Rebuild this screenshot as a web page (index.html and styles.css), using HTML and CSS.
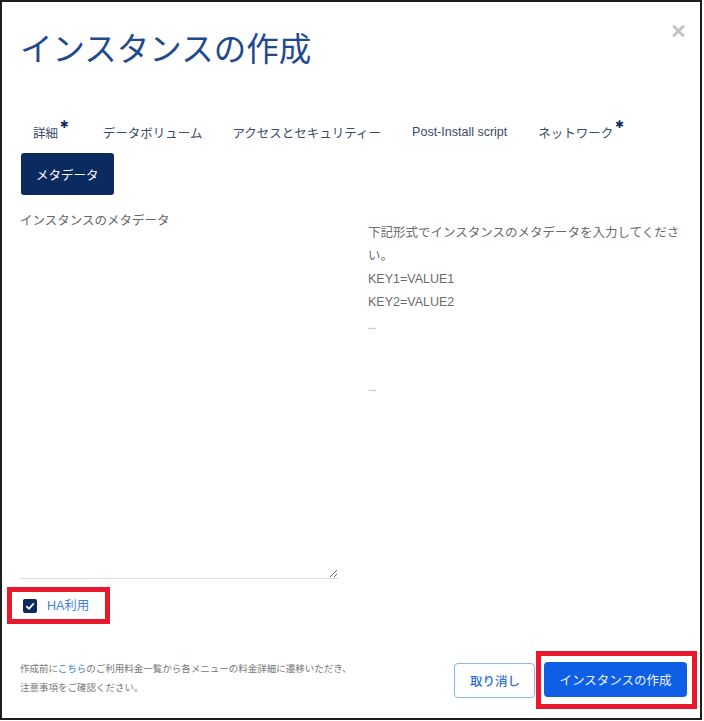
FILE: index.html
```html
<!DOCTYPE html>
<html lang="ja">
<head>
    <meta charset="UTF-8">
    <title>インスタンスの作成</title>
    <link rel="stylesheet" href="styles.css">
</head>
<body>
    <div class="frame">
        <div class="header">
            <h1>インスタンスの作成</h1>
            <button class="close" aria-label="閉じる">
                <svg width="13" height="12" viewBox="0 0 13 12">
                    <path d="M2 1.5 L11 10.5 M11 1.5 L2 10.5" stroke="#c4c4c4" stroke-width="3" stroke-linecap="round"/>
                </svg>
            </button>
        </div>

        <div class="tabs">
            <span class="tab">詳細<span class="req">✱</span></span>
            <span class="tab">データボリューム</span>
            <span class="tab">アクセスとセキュリティー</span>
            <span class="tab latin">Post-Install script</span>
            <span class="tab">ネットワーク<span class="req">✱</span></span>
            <span class="tab active">メタデータ</span>
        </div>

        <div class="body">
            <div class="col-left">
                <label class="field-label" for="metadata">インスタンスのメタデータ</label>
                <textarea id="metadata" spellcheck="false"></textarea>
            </div>
            <div class="col-right">
                <div>下記形式でインスタンスのメタデータを入力してください。</div>
                <div>KEY1=VALUE1</div>
                <div>KEY2=VALUE2</div>
                <div class="dots">...</div>
                <div class="dots last">...</div>
            </div>
        </div>

        <div class="mark ha">
            <span class="checkbox">
                <svg width="14" height="14" viewBox="0 0 14 14">
                    <path d="M3.3 7.2 L6 9.8 L10.8 4.4" fill="none" stroke="#fff" stroke-width="1.8"/>
                </svg>
            </span>
            <span class="ha-label">HA利用</span>
        </div>

        <div class="footer">
            <p class="note">作成前に<a href="#">こちら</a>のご利用料金一覧から各メニューの料金詳細に遷移いただき、<br>注意事項をご確認ください。</p>
            <div class="actions">
                <button class="btn btn-cancel">取り消し</button>
                <div class="mark create">
                    <button class="btn btn-create">インスタンスの作成</button>
                </div>
            </div>
        </div>
    </div>
</body>
</html>
```

FILE: styles.css
```css
body {
    margin: 0;
    font-family: "Liberation Sans", "Noto Sans CJK JP", sans-serif;
    background-color: #fff;
}

.frame {
    width: 702px;
    height: 720px;
    box-sizing: border-box;
    border: 2px solid #1e1e1e;
    background-color: #fff;
}

.header {
    display: flex;
    justify-content: space-between;
    align-items: flex-start;
    padding: 28px 15px 0 18px;
}

.header h1 {
    margin: 0;
    font-size: 32.5px;
    line-height: 40px;
    font-weight: normal;
    color: #1f4a8e;
}

.close {
    margin-top: -5px;
    padding: 0;
    border: none;
    background: none;
    line-height: 0;
    cursor: pointer;
}

.tabs {
    display: flex;
    flex-wrap: wrap;
    margin-top: 41px;
    padding-left: 16px;
    padding-right: 18px;
}

.tab {
    display: flex;
    align-items: center;
    height: 42px;
    padding: 0 15px;
    font-size: 12.5px;
    color: #3a4b68;
    white-space: nowrap;
}

.tab.latin {
    padding: 0 16px;
}

.tab .req {
    align-self: flex-start;
    margin-top: 8px;
    margin-left: 2px;
    margin-right: 4px;
    font-family: "DejaVu Sans", sans-serif;
    font-size: 10.5px;
    line-height: 11px;
    color: #0b2a5f;
}

.tab.active {
    margin-left: 3px;
    background-color: #0b2a5f;
    color: #fff;
    border-radius: 3px;
}

.body {
    display: grid;
    grid-template-columns: 320px 314px;
    column-gap: 28px;
    margin-top: 16px;
    padding-left: 18px;
}

.field-label {
    display: block;
    font-size: 12.5px;
    line-height: 20px;
    color: #666;
}

textarea {
    display: block;
    width: 318px;
    height: 348px;
    box-sizing: border-box;
    margin: 0;
    border: none;
    border-bottom: 1px solid #dcdcdc;
    outline: none;
    resize: vertical;
    font-family: inherit;
}

.col-right {
    padding-top: 11px;
    font-size: 12.5px;
    line-height: 23px;
    color: #6b6b6b;
}

.col-right .dots {
    font-size: 10px;
    color: #888;
}

.col-right .dots.last {
    margin-top: 39px;
}

/* 赤枠 (注記用) */
.mark {
    border: 5px solid #e8192c;
}

.mark.ha {
    display: inline-flex;
    align-items: center;
    gap: 10px;
    margin-top: 8px;
    margin-left: 5px;
    padding: 7px 16px 6px 11px;
}

.checkbox {
    width: 14px;
    height: 14px;
    border-radius: 2px;
    background-color: #0b2a5f;
    line-height: 0;
}

.ha-label {
    font-size: 12.5px;
    line-height: 14px;
    color: #3d7fe3;
}

.footer {
    display: flex;
    justify-content: space-between;
    align-items: center;
    margin-top: 27px;
    padding: 0 3px 0 18px;
}

.note {
    margin: 0 0 5px 0;
    font-size: 9.5px;
    line-height: 19px;
    color: #777;
    white-space: nowrap;
}

.note a {
    color: #3a7fd5;
    text-decoration: none;
}

.actions {
    display: flex;
    align-items: center;
    gap: 1px;
}

.mark.create {
    padding: 6px 5px 7px 3px;
}

.btn {
    display: block;
    height: 35px;
    box-sizing: border-box;
    padding: 0 15px;
    font-family: inherit;
    font-size: 12.5px;
    border-radius: 4px;
    cursor: pointer;
    white-space: nowrap;
}

.btn-cancel {
    width: 81px;
    background-color: #fff;
    border: 1px solid #8fb4ef;
    color: #2e6fd8;
    font-weight: 500;
}

.btn-create {
    width: 143px;
    background-color: #0f5fe6;
    border: none;
    color: #eef3ff;
}
```
